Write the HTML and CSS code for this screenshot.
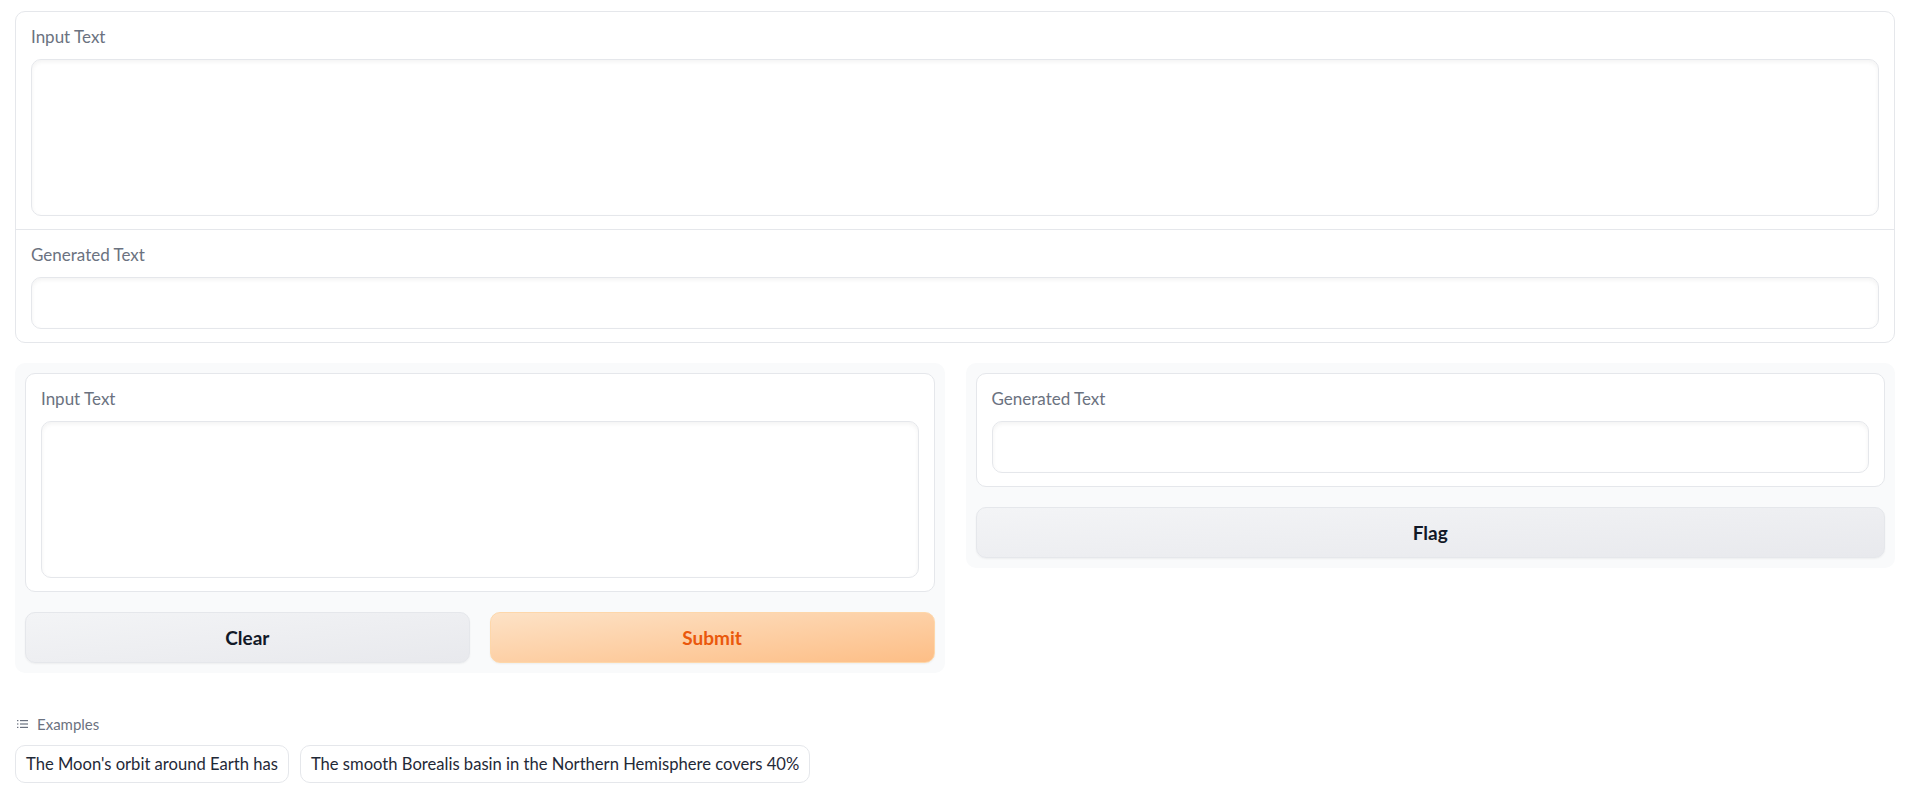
FILE: index.html
```html
<!DOCTYPE html>
<html>

<head>
  <title>Text Generation</title>
  <link rel="stylesheet" href="styles.css">
</head>

<body>
  <div class="group">
    <div class="block">
      <label class="block-label" for="top-input">Input Text</label>
      <textarea class="field field-area" id="top-input"></textarea>
    </div>
    <div class="block divided">
      <label class="block-label" for="top-output">Generated Text</label>
      <input class="field field-line" id="top-output" type="text">
    </div>
  </div>

  <div class="row">
    <div class="panel">
      <div class="block card">
        <label class="block-label" for="input-text">Input Text</label>
        <textarea class="field field-area" id="input-text"></textarea>
      </div>
      <div class="button-row">
        <button class="btn btn-secondary">Clear</button>
        <button class="btn btn-primary">Submit</button>
      </div>
    </div>

    <div class="panel">
      <div class="block card">
        <label class="block-label" for="generated-text">Generated Text</label>
        <input class="field field-line" id="generated-text" type="text">
      </div>
      <button class="btn btn-secondary">Flag</button>
    </div>
  </div>

  <div class="examples">
    <div class="examples-label">
      <svg class="list-icon" width="11" height="10" viewBox="0 0 11 10">
        <rect x="0" y="1" width="1.4" height="1.2" fill="#6b7280" />
        <rect x="0" y="4.4" width="1.4" height="1.2" fill="#6b7280" />
        <rect x="0" y="7.8" width="1.4" height="1.2" fill="#6b7280" />
        <rect x="3" y="1" width="8" height="1.2" fill="#6b7280" />
        <rect x="3" y="4.4" width="8" height="1.2" fill="#6b7280" />
        <rect x="3" y="7.8" width="8" height="1.2" fill="#6b7280" />
      </svg>
      Examples
    </div>
    <div class="examples-list">
      <button class="example">The Moon's orbit around Earth has</button>
      <button class="example">The smooth Borealis basin in the Northern Hemisphere covers 40%</button>
    </div>
  </div>
</body>

</html>
```

FILE: styles.css
```css
body {
  font-family: Lato, "Open Sans", sans-serif;
  margin: 0;
  padding: 11px 16px 0 15px;
  background-color: #fff;
  color: #1f2937;
}

.group {
  border: 1px solid #e5e7eb;
  border-radius: 10px;
  background-color: #fff;
}

.block {
  display: flex;
  flex-direction: column;
  padding: 12px 15px 13px;
}

.block.divided {
  border-top: 1px solid #e5e7eb;
}

.block.card {
  border: 1px solid #e5e7eb;
  border-radius: 10px;
  background-color: #fff;
}

.block-label {
  font-size: 17px;
  line-height: 26px;
  color: #6b7280;
  margin-bottom: 9px;
}

.field {
  box-sizing: border-box;
  width: 100%;
  border: 1px solid #e5e7eb;
  border-radius: 10px;
  background-color: #fff;
  box-shadow: inset 0 2px 4px rgba(0, 0, 0, 0.05);
  font-family: inherit;
  font-size: 17px;
  padding: 10px 13px;
  margin: 0;
  outline: none;
  color: #1f2937;
}

.field-area {
  height: 157px;
  resize: none;
  display: block;
}

.field-line {
  height: 52px;
}

.row {
  display: grid;
  grid-template-columns: 1fr 1fr;
  gap: 21px;
  align-items: start;
  margin-top: 20px;
}

.panel {
  display: flex;
  flex-direction: column;
  gap: 20px;
  padding: 10px;
  border-radius: 10px;
  background-color: #f9fafb;
}

.button-row {
  display: grid;
  grid-template-columns: 1fr 1fr;
  gap: 20px;
}

.btn {
  font-family: inherit;
  font-size: 19px;
  font-weight: bold;
  line-height: 29px;
  padding: 10px;
  border-radius: 10px;
  cursor: pointer;
  box-shadow: 0 1px 2px rgba(0, 0, 0, 0.05);
}

.btn-secondary {
  border: 1px solid #e5e7eb;
  background: linear-gradient(to bottom right, #f3f4f6, #e8e9ed);
  color: #111827;
}

.btn-primary {
  border: 1px solid #fed7aa;
  background: linear-gradient(to bottom right, #fde2c6, #fdbe86);
  color: #ea580c;
}

.examples {
  margin-top: 40px;
}

.examples-label {
  display: flex;
  align-items: center;
  gap: 9px;
  padding-left: 2px;
  font-size: 15px;
  line-height: 22px;
  color: #6b7280;
}

.examples-list {
  display: flex;
  gap: 11px;
  margin-top: 10px;
}

.example {
  font-family: inherit;
  font-size: 16.6px;
  line-height: 24px;
  padding: 6px 10px;
  border: 1px solid #e5e7eb;
  border-radius: 10px;
  background-color: #fff;
  color: #1f2937;
  cursor: pointer;
}
```
